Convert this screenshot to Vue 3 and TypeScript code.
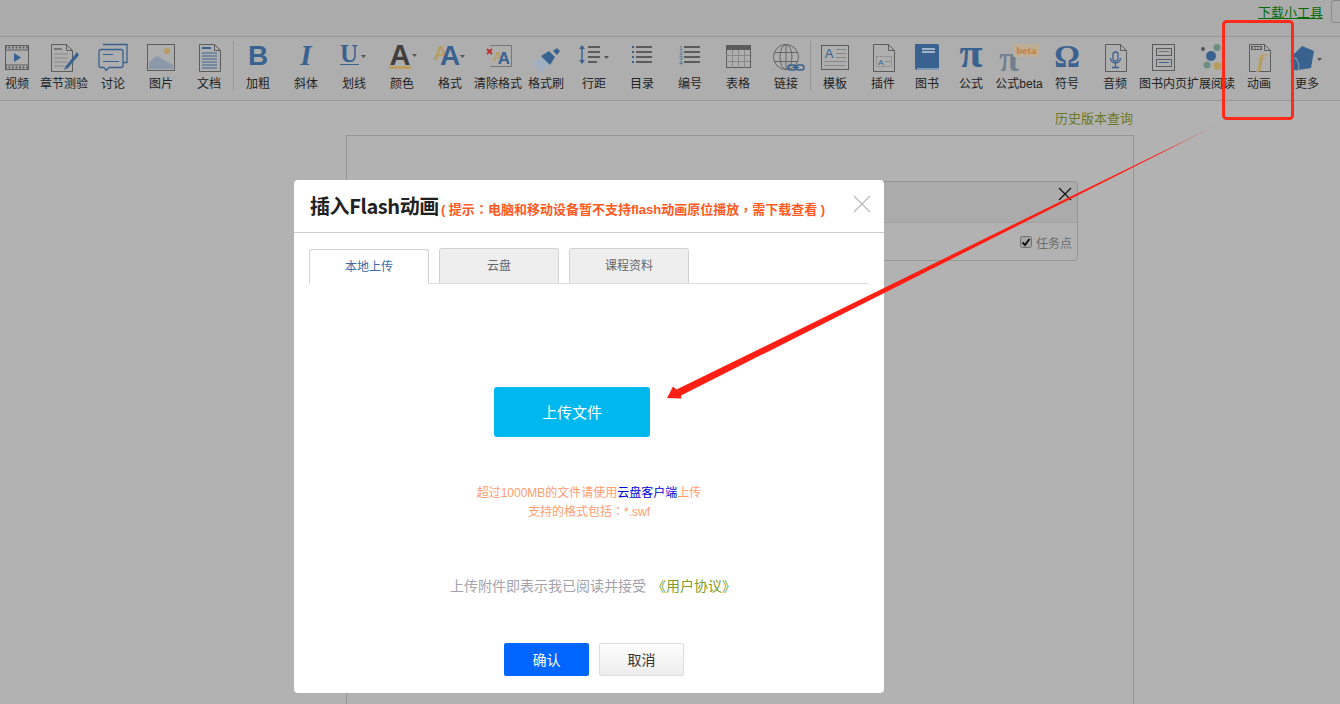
<script setup lang="ts">
interface Tool { label: string; width: number; icon: string }
const G = '#5c5c5c'
const B = '#3a6290'
const T = '#b89c62'
const sans = 'font-family="Liberation Sans"'
const serif = 'font-family="Liberation Serif"'
const caret = (x: number, y: number) => `<path d="M${x} ${y}h5l-2.500 3z" fill="#555"/>`
const doc = `<path d="M0.500 0.500h15l6 6v21h-21z" fill="none" stroke="${G}"/><path d="M15.500 0.500v6h6" fill="none" stroke="${G}"/>`
const at = (x: number, y: number, s: string) => `<g transform="translate(${x} ${y})">${s}</g>`
const lines = (x: number, w: number, ys: number[], c: string, sw = 2) =>
  ys.map((y) => `<path d="M${x} ${y}h${w}" stroke="${c}" stroke-width="${sw}"/>`).join('')

const tools: Tool[] = [
  { label: '视频', width: 34, icon: `<rect x="8.500" y="2.500" width="23" height="24" fill="none" stroke="${G}"/><path d="M8 7h24M8 22h24" stroke="${G}" stroke-width="1"/><path d="M8 4.500h24M8 24.500h24" stroke="${G}" stroke-width="2" stroke-dasharray="2 1.500"/><path d="M17 10l7 4.500-7 4.500z" fill="${B}"/>` },
  { label: '章节测验', width: 60, icon: at(7, 1, doc) + lines(10, 8, [6], '#777') + lines(10, 14, [11, 15, 19, 23], '#888', 1) + `<path d="M33 9L22 23l-2 4 4-2L35 12z" fill="${B}"/>` },
  { label: '讨论', width: 38, icon: `<path d="M10 1.500h24v18h-4" fill="none" stroke="${B}" stroke-width="1.300"/><path d="M8 6.500h20a2 2 0 0 1 2 2v14a2 2 0 0 1-2 2H16l-3 3-2-3H8a2 2 0 0 1-2-2v-14a2 2 0 0 1 2-2z" fill="#aeaeae" stroke="${B}" stroke-width="1.300"/>` + lines(10, 10, [11.500], B, 1) + lines(10, 16, [18.500], B, 1) },
  { label: '图片', width: 58, icon: `<rect x="6.500" y="1.500" width="27" height="26" fill="none" stroke="${G}"/><path d="M8 26v-7l8-6 16 9v4z" fill="#8a9aab"/><circle cx="26" cy="8" r="3" fill="${T}"/>` },
  { label: '文档', width: 38, icon: at(10, 1, doc) + lines(13, 9, [5], B) + lines(13, 15, [10, 13, 16, 19, 22, 25], B, 1) },
  { label: '加粗', width: 48, icon: `<text x="20" y="22" text-anchor="middle" ${sans} font-weight="700" font-size="28" fill="${B}">B</text>` },
  { label: '斜体', width: 48, icon: `<text x="20" y="22" text-anchor="middle" ${serif} font-weight="700" font-style="italic" font-size="29" fill="${B}">I</text>` },
  { label: '划线', width: 48, icon: `<text x="15" y="19" text-anchor="middle" ${serif} font-weight="700" font-size="25" fill="${B}">U</text><path d="M6 21.500h19" stroke="${B}"/>` + caret(27, 12) },
  { label: '颜色', width: 48, icon: `<text x="18" y="22" text-anchor="middle" ${sans} font-weight="700" font-size="29" fill="#3f3f3f">A</text><rect x="7" y="23" width="22" height="3" fill="${T}"/>` + caret(30, 11) },
  { label: '格式', width: 48, icon: `<text x="11" y="17" text-anchor="middle" ${sans} font-weight="700" font-size="20" fill="${T}">A</text><text x="20" y="22" text-anchor="middle" ${sans} font-weight="700" font-size="28" fill="${B}">A</text>` + caret(30, 12) },
  { label: '清除格式', width: 48, icon: `<path d="M12 2.500h21.500v21h-21" fill="none" stroke="#777"/><text x="20" y="18" text-anchor="middle" ${sans} font-weight="700" font-size="13" fill="${T}">A</text><text x="26" y="21" text-anchor="middle" ${sans} font-weight="700" font-size="17" fill="${B}">A</text><path d="M9 6l5 5m0-5l-5 5" stroke="#b33" stroke-width="2"/>` },
  { label: '格式刷', width: 48, icon: `<path d="M6 19l11-5 8 6-10 10z" fill="#9fb0c2"/><path d="M15 13l8-5 6 6-5 8z" fill="${B}"/><path d="M27 8l4-3 3 3-3 4z" fill="${B}"/>` },
  { label: '行距', width: 48, icon: `<path d="M8 5v13" stroke="${B}" stroke-width="1.500"/><path d="M8 2l3 4H5zM8 21l3-4H5z" fill="${B}"/>` + lines(14, 12, [4, 9, 14], G) + lines(14, 9, [19], G) + caret(30, 13) },
  { label: '目录', width: 48, icon: `<path d="M10 3h2v2h-2zM10 8h2v2h-2zM10 13h2v2h-2zM10 18h2v2h-2z" fill="${B}"/>` + lines(14, 16, [4, 9, 14, 19], G) },
  { label: '编号', width: 48, icon: `<text x="11" y="7" text-anchor="middle" ${sans} font-size="6" fill="${B}">1</text><text x="11" y="12" text-anchor="middle" ${sans} font-size="6" fill="${B}">2</text><text x="11" y="17" text-anchor="middle" ${sans} font-size="6" fill="${B}">3</text><text x="11" y="22" text-anchor="middle" ${sans} font-size="6" fill="${B}">4</text>` + lines(14, 16, [4, 9, 14, 19], G) },
  { label: '表格', width: 48, icon: `<rect x="8.500" y="2.500" width="24" height="22" fill="none" stroke="${G}"/><rect x="8" y="2" width="25" height="5" fill="${G}"/><path d="M8 12.500h24M8 18.500h24M14.500 7v18M20.500 7v18M26.500 7v18" stroke="#888"/>` },
  { label: '链接', width: 48, icon: `<circle cx="20" cy="14" r="12.500" fill="none" stroke="#666"/><ellipse cx="20" cy="14" rx="6" ry="12.500" fill="none" stroke="#666"/><path d="M20 1.500v25M8 9.500h24M8 18.500h24" stroke="#666"/><rect x="22" y="22" width="8" height="5" rx="2.500" fill="none" stroke="${B}" stroke-width="1.500"/><rect x="30" y="22" width="8" height="5" rx="2.500" fill="none" stroke="${B}" stroke-width="1.500"/><path d="M27 24.500h6" stroke="${B}" stroke-width="1.500"/>` },
  { label: '模板', width: 48, icon: `<rect x="6.500" y="2.500" width="27" height="24" fill="none" stroke="${G}"/><text x="14" y="15" text-anchor="middle" ${sans} font-size="13" fill="${B}">A</text>` + lines(21, 10, [6.500, 10.500, 14.500], '#888', 1) + lines(9, 22, [18.500, 22.500], '#888', 1) },
  { label: '插件', width: 48, icon: at(10, 1, doc) + `<rect x="13.500" y="13.500" width="15" height="10" fill="none" stroke="#888" stroke-dasharray="2 1"/><text x="18" y="22" text-anchor="middle" ${sans} font-size="8" fill="${B}">A</text>` + lines(22, 5, [18.500], '#888', 1) },
  { label: '图书', width: 40, icon: `<path d="M8 1h22a2 2 0 0 1 2 2v24H10a2 2 0 0 1-2-2z" fill="${B}"/>` + lines(15, 13, [6, 9], '#c5d0dc', 1.500) + lines(10, 22, [26], '#c5d0dc', 1) },
  { label: '公式', width: 48, icon: `<text x="20" y="24" text-anchor="middle" ${serif} font-weight="700" font-size="42" fill="${B}">π</text>` },
  { label: '公式beta', width: 48, icon: `<text x="10" y="28" text-anchor="middle" ${serif} font-weight="700" font-size="36" fill="#708090">π</text><rect x="14" y="1" width="27" height="13" rx="2" fill="#bfae96"/><text x="27.500" y="11" text-anchor="middle" ${serif} font-weight="700" font-size="11" fill="#c97e3c">beta</text>` },
  { label: '符号', width: 48, icon: `<text x="20" y="24" text-anchor="middle" ${serif} font-weight="700" font-size="32" fill="${B}">Ω</text>` },
  { label: '音频', width: 48, icon: at(10, 1, doc) + `<rect x="18" y="9" width="5" height="9" rx="2.500" fill="none" stroke="${B}" stroke-width="1.300"/><path d="M15.500 15a5 5 0 0 0 10 0M20.500 20v4M17 24.500h7" fill="none" stroke="${B}" stroke-width="1.300"/>` },
  { label: '图书内页', width: 48, icon: `<rect x="9.500" y="1.500" width="22" height="26" fill="none" stroke="${G}"/><rect x="13.500" y="5.500" width="15" height="7" fill="none" stroke="${G}"/><rect x="13.500" y="16.500" width="15" height="7" fill="none" stroke="${G}"/>` + lines(16, 10, [8.500], '#777', 1) + lines(16, 10, [19.500], B, 1) },
  { label: '扩展阅读', width: 48, icon: `<circle cx="20" cy="13" r="5" fill="${B}"/><circle cx="26" cy="4.500" r="3.500" fill="#6d8f7e"/><circle cx="16" cy="22" r="3.500" fill="#6d8f7e"/><circle cx="26.500" cy="23" r="4" fill="${T}"/><circle cx="12" cy="6" r="2" fill="#555"/>` },
  { label: '动画', width: 48, icon: at(10, 1, doc) + `<rect x="12" y="3" width="11" height="4" fill="${G}"/><path d="M13.500 5h8" stroke="#bbb" stroke-dasharray="2 1" stroke-width="2"/><text x="22" y="25" text-anchor="middle" font-family="DejaVu Serif" font-weight="700" font-style="italic" font-size="18" fill="${T}">f</text>` },
  { label: '更多', width: 48, icon: `<path d="M15 3l12 5-3 17-13 2-5-15z" fill="${B}"/><path d="M3 17l6-2 3 7-1 6-6-1z" fill="${B}" stroke="#aeaeae" stroke-width="0.800"/>` + caret(30, 15) },
]
</script>

<template>
  <div class="page">
    <header class="topbar">
      <a class="tool-link">下载小工具</a>
      <span class="top-box"></span>
    </header>
    <nav class="toolbar">
      <template v-for="(t, i) in tools" :key="t.label">
        <span v-if="i === 5" class="sep"></span>
        <span v-if="i === 17" class="sep tight"></span>
        <div class="tool" :style="{ width: t.width + 'px' }">
          <svg class="icon" width="40" height="30" viewBox="0 0 40 30" v-html="t.icon"></svg>
          <span class="tool-label">{{ t.label }}</span>
        </div>
      </template>
    </nav>
    <div class="history">历史版本查询</div>
    <section class="frame">
      <div class="card">
        <div class="card-head">
          <svg class="card-x" width="14" height="14" viewBox="0 0 14 14">
            <path d="M1 1l12 12M13 1L1 13" stroke="#111" stroke-width="1.200" fill="none" />
          </svg>
        </div>
        <div class="card-foot">
          <svg class="check" width="12" height="12" viewBox="0 0 12 12">
            <rect x="0.500" y="0.500" width="11" height="11" rx="2" fill="#a6a6a6" stroke="#6f6f6f" />
            <path d="M2.500 6.500l2.500 2.500 4.500-6" stroke="#111" stroke-width="2" fill="none" />
          </svg>
          <span>任务点</span>
        </div>
      </div>
    </section>

    <div class="modal">
      <div class="modal-head">
        <h2 class="modal-title">插入Flash动画</h2>
        <span class="modal-hint">( 提示<span class="punct">：</span>电脑和移动设备暂不支持flash动画原位播放<span class="punct">，</span>需下载查看 )</span>
        <svg class="modal-close" width="18" height="18" viewBox="0 0 18 18">
          <path d="M1 1l16 16M17 1L1 17" stroke="#bdbdbd" stroke-width="1.300" fill="none" />
        </svg>
      </div>
      <div class="tabs">
        <div class="tab active">本地上传</div>
        <div class="tab">云盘</div>
        <div class="tab">课程资料</div>
      </div>
      <div class="modal-body">
        <button class="upload">上传文件</button>
        <p class="note">超过1000MB的文件请使用<a class="note-link">云盘客户端</a>上传<br />支持的格式包括<span class="punct">：</span>*.swf</p>
        <p class="agree">上传附件即表示我已阅读并接受 <span class="agree-link">《用户协议》</span></p>
      </div>
      <div class="modal-foot">
        <button class="btn primary">确认</button>
        <button class="btn plain">取消</button>
      </div>
    </div>

    <svg class="annot" width="1340" height="704" viewBox="0 0 1340 704">
      <defs>
        <linearGradient id="arrowFade" gradientUnits="userSpaceOnUse" x1="1225" y1="121" x2="1160" y2="153">
          <stop offset="0" stop-color="#ff1f14" stop-opacity="0" />
          <stop offset="1" stop-color="#ff1f14" />
        </linearGradient>
      </defs>
      <rect x="1223.500" y="21.500" width="69" height="97" rx="3" fill="none" stroke="#ff2a1a" stroke-width="3" />
      <path d="M1225 121L681 395.500 681.500 398.500 667 398 673 386.500 676.500 389.500z" fill="url(#arrowFade)" />
    </svg>
  </div>
</template>

<style>
body { margin: 0; }
</style>

<style scoped>
.page {
  position: relative;
  width: 1340px;
  height: 704px;
  overflow: hidden;
  background: #b2b2b2;
  font-family: "Liberation Sans", "Noto Sans CJK SC", sans-serif;
  font-size: 12px;
  color: #222;
}
.topbar {
  height: 36px;
  box-sizing: border-box;
  background: #ababab;
  display: flex;
  justify-content: flex-end;
  align-items: flex-start;
  gap: 8px;
  padding-top: 4px;
}
.tool-link {
  font-size: 13px;
  line-height: 17px;
  color: #066b06;
  text-decoration: underline;
}
.top-box {
  width: 20px;
  height: 23px;
  margin-top: -4px;
  margin-right: -11px;
  box-sizing: border-box;
  border: 1px solid #8a8a8a;
  border-radius: 3px;
}
.toolbar {
  height: 65px;
  box-sizing: border-box;
  border-top: 1px solid #969696;
  border-bottom: 1px solid #969696;
  background: #aeaeae;
  display: flex;
}
.sep {
  width: 1px;
  flex: none;
  height: 50px;
  margin: 4px 0 0 5px;
  background: #969696;
}
.sep.tight { margin-left: 0; }
.tool {
  flex: none;
  display: flex;
  flex-direction: column;
  align-items: center;
  padding-top: 6px;
  position: relative;
}
.icon { flex: none; display: block; overflow: visible; }
.tool-label {
  margin-top: 3px;
  line-height: 16px;
  white-space: nowrap;
  color: #222;
}
.history {
  height: 34px;
  box-sizing: border-box;
  margin-right: 207px;
  padding-top: 9px;
  text-align: right;
  font-size: 13px;
  line-height: 17px;
  color: #6a7828;
}
.frame {
  margin-left: 346px;
  width: 788px;
  height: 600px;
  box-sizing: border-box;
  border: 1px solid #969696;
  padding: 45px 55px 0 60px;
}
.card {
  border: 1px solid #969696;
  border-radius: 3px;
  height: 80px;
  box-sizing: border-box;
  overflow: hidden;
}
.card-head {
  height: 40px;
  background: #ababab;
  border-bottom: 1px solid #a0a0a0;
  display: flex;
  justify-content: flex-end;
}
.card-x { margin: 5px 5px 0 0; }
.card-foot {
  display: flex;
  justify-content: flex-end;
  align-items: center;
  gap: 4px;
  height: 38px;
  padding-right: 5px;
  color: #6a6a6a;
  font-size: 12px;
}
.modal {
  position: absolute;
  left: 294px;
  top: 180px;
  width: 590px;
  height: 513px;
  box-sizing: border-box;
  background: #fff;
  border-radius: 4px;
  display: flex;
  flex-direction: column;
}
.modal-head {
  height: 53px;
  flex: none;
  box-sizing: border-box;
  border-bottom: 1px solid #ccc;
  display: flex;
  align-items: center;
  padding: 0 13px 0 16px;
}
.modal-title {
  margin: 0;
  font-size: 20px;
  line-height: 52px;
  font-weight: 700;
  color: #222;
  letter-spacing: -0.4px;
  font-family: "Noto Sans CJK SC", sans-serif;
}
.modal-hint {
  margin-left: 2px;
  margin-top: 4px;
  font-size: 13px;
  font-weight: 700;
  color: #ff5a1f;
  white-space: nowrap;
}
.punct { font-family: "Noto Sans CJK TC", sans-serif; }
.modal-close { margin-left: auto; margin-top: -4px; }
.tabs {
  flex: none;
  margin: 15px 15px 0;
  height: 36px;
  display: flex;
  gap: 10px;
  border-bottom: 1px solid #ddd;
  box-sizing: border-box;
}
.tab {
  width: 120px;
  height: 35px;
  box-sizing: border-box;
  border: 1px solid #d2d2d2;
  border-bottom: 0;
  border-radius: 3px 3px 0 0;
  background: #eee;
  text-align: center;
  line-height: 35px;
  color: #666;
}
.tab.active {
  margin-top: 1px;
  background: #fff;
  color: #3b6aa8;
}
.modal-body {
  flex: 1;
  display: flex;
  flex-direction: column;
  align-items: center;
  padding-top: 103px;
}
.upload {
  width: 156px;
  height: 50px;
  margin-right: 34px;
  padding: 0 0 2px;
  border: 0;
  border-radius: 3px;
  background: #00b7ee;
  color: #fff;
  font: inherit;
  font-size: 15px;
}
.note {
  margin: 47px 0 0;
  text-align: center;
  font-size: 12px;
  line-height: 18px;
  color: #ff9c6e;
}
.note-link { color: #0000d8; }
.agree {
  margin: 56px 0 0 8px;
  font-size: 14px;
  line-height: 18px;
  color: #a3a3ad;
  white-space: nowrap;
}
.agree-link { color: #7d9c2c; margin-left: 2px; }
.modal-foot {
  flex: none;
  height: 50px;
  display: flex;
  gap: 10px;
  padding-left: 210px;
  box-sizing: border-box;
}
.btn {
  width: 85px;
  height: 33px;
  padding: 0 0 2px;
  box-sizing: border-box;
  border-radius: 2px;
  font: inherit;
  font-size: 14px;
}
.btn.primary {
  border: 0;
  background: #0066ff;
  color: #fff;
}
.btn.plain {
  border: 1px solid #ddd;
  background: linear-gradient(#fff, #ececec);
  color: #333;
}
.annot {
  position: absolute;
  left: 0;
  top: 0;
  pointer-events: none;
}
</style>
